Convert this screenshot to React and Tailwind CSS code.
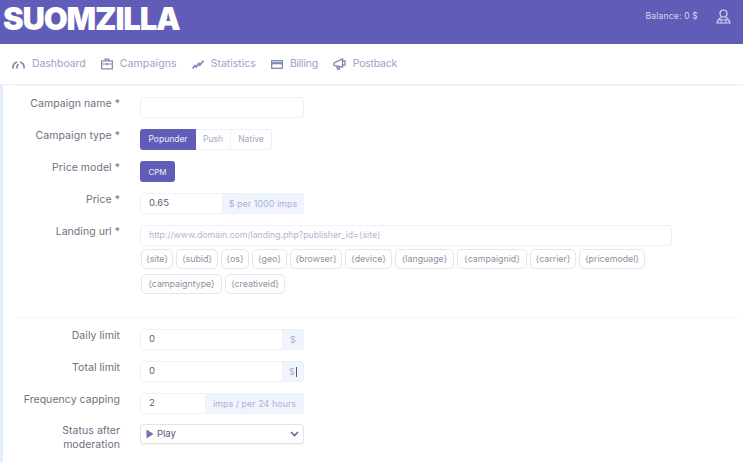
import React from "react";

function Row({ label, children, className = "" }) {
  return (
    <div className={"flex gap-5 " + className}>
      <label className="w-[102px] shrink-0 text-right text-[10.5px] leading-[14px] tracking-[0.05px] text-[#6e7180]">{label}</label>
      <div className="flex-1 min-w-0">{children}</div>
    </div>
  );
}

function Group({ value, addon, inputW }) {
  return (
    <div className="flex w-[164px] h-[21px] rounded-[3px] border border-[#edf1f9] overflow-hidden">
      <div className="flex items-center pl-2 text-[9.5px] text-[#5c6070] bg-white border-r border-[#edf1f9]" style={{ width: inputW }}>{value}</div>
      <div className="flex-1 flex items-center justify-center bg-[#f0f5fd] text-[9px] text-[#aab2d5]">{addon}</div>
    </div>
  );
}

const tags = [
  ["{site}", 32], ["{subid}", 42], ["{os}", 28], ["{geo}", 35], ["{browser}", 52], ["{device}", 47],
  ["{language}", 59], ["{campaignid}", 70], ["{carrier}", 46], ["{pricemodel}", 66], ["{campaigntype}", 81], ["{creativeid}", 60],
];

const Tag = ({ children, width }) => (
  <span style={{ width }} className="h-[20px] flex items-center justify-center rounded-[5px] border border-[#e6e6ea] text-[8.8px] text-[#8e91a0] bg-white">{children}</span>
);

const NavItem = ({ icon, label, className = "" }) => (
  <div className={"flex items-center gap-[7px] text-[#9aa3c6] text-[10.5px] " + className}>
    {icon}
    <span>{label}</span>
  </div>
);

const stroke = { fill: "none", stroke: "#7d88b5", strokeWidth: 1.3 };

export default function App() {
  return (
    <div className="w-[743px] h-[462px] overflow-hidden bg-white font-['Inter',sans-serif]">
      <header className="h-[44px] bg-[#625cb9] flex items-center pl-[3px] pr-[12px]">
        <div className="text-white font-black text-[31px] leading-none tracking-[-1.15px] mt-[-7px]">SUOMZILLA</div>
        <div className="ml-auto flex items-center gap-[18px] mt-[-12px]">
          <span className="text-[8.5px] tracking-[0.2px] text-[#d6d5f3]">Balance: 0 $</span>
          <svg width="15" height="15" viewBox="0 0 15 15" fill="none" stroke="#d6d5f3" strokeWidth="1.2">
            <circle cx="7.5" cy="4.5" r="3.5" />
            <path d="M5 8 C4.5 9.5 2 9.5 1 14 H14 C13 9.5 10.5 9.5 10 8" />
            <path d="M2.5 11 H12.5 M5.5 10 L5 14 M9.5 10 L10 14" strokeWidth="0.9" />
          </svg>
        </div>
      </header>

      <nav className="h-[40px] flex items-center pl-[12px] gap-[15px] bg-white">
        <NavItem label="Dashboard" className="tracking-[-0.05px]" icon={
          <svg width="13" height="9" viewBox="0 0 13 9" fill="none" stroke="#7d88b5" strokeWidth="1.7"><path d="M1 8.5 A6 6 0 0 1 5 2 M6 4 L4.5 8.5 M8 2 A6 6 0 0 1 12 8.5" /></svg>
        } />
        <NavItem label="Campaigns" className="tracking-[0.12px]" icon={
          <svg width="12" height="12" viewBox="0 0 13 12" {...stroke}><rect x="0.7" y="2.7" width="11.6" height="8.6" /><path d="M4.5 2.5 V0.8 H8.5 V2.5 M0.7 6 H12.3 M6.5 5 V7.5" /></svg>
        } />
        <NavItem label="Statistics" icon={
          <svg width="12" height="9" viewBox="0 0 12 9" fill="none" stroke="#7d88b5" strokeWidth="1.7"><path d="M0.5 8.5 L3 5.5 L4.3 7 L6.8 3.5 L7.8 5 L11.5 0.6" /></svg>
        } />
        <NavItem label="Billing" className="tracking-[-0.25px]" icon={
          <svg width="12" height="9" viewBox="0 0 12 9" {...stroke}><rect x="0.7" y="0.7" width="10.6" height="7.6" /><path d="M0.7 3.2 H11.3" strokeWidth="2.2" /></svg>
        } />
        <NavItem label="Postback" className="tracking-[-0.25px]" icon={
          <svg width="13" height="12" viewBox="0 0 13 12" {...stroke}><path d="M1 5 L9.5 0.8 V9.2 L1 7.5 Z M9.5 3 H12 V7 H9.5 M3.5 8 L4.5 11 H6.5 L5.8 8.5" /></svg>
        } />
      </nav>

      <div className="h-[462px] border-t border-[#e9f1fb] border-l-[3px] border-l-[#e3eefb] pl-[15px]">
        <div className="border-t border-dotted border-[#e6eefa] mr-[3px]"></div>
        <div className="pt-[11px]">
          <Row label="Campaign name *" className="mb-[11px]">
            <div className="w-[164px] h-[21px] rounded-[3px] border border-[#edf1f9] bg-white"></div>
          </Row>
          <Row label="Campaign type *" className="mb-[11px]">
            <div className="flex h-[21px] text-[8.5px]">
              <span className="w-[56px] flex items-center justify-center rounded-l-[3px] bg-[#625cb9] text-[#eeeefa]">Popunder</span>
              <span className="w-[35px] flex items-center justify-center border-y border-r border-[#edf1f9] text-[#a5a8c6]">Push</span>
              <span className="w-[41px] flex items-center justify-center border-y border-r border-[#edf1f9] rounded-r-[3px] text-[#a5a8c6]">Native</span>
            </div>
          </Row>
          <Row label="Price model *" className="mb-[11px]">
            <span className="w-[35px] h-[21px] flex items-center justify-center rounded-[3px] bg-[#625cb9] text-[#eeeefa] text-[8px]">CPM</span>
          </Row>
          <Row label="Price *" className="mb-[11px]">
            <Group value="0.65" addon="$ per 1000 imps" inputW={82} />
          </Row>
          <Row label="Landing url *" className="mb-[3px]">
            <div className="w-[532px] h-[21px] rounded-[3px] border border-[#edf1f9] flex items-center pl-2 text-[8.7px] text-[#b2b6d0]">http://www.domain.com/landing.php?publisher_id={"{site}"}</div>
          </Row>
          <Row label="" className="mb-[23px]">
            <div className="flex flex-wrap gap-x-[3px] gap-y-[5px] w-[520px] ml-[1px]">
              {tags.map(([t, w]) => (
                <Tag key={t} width={w}>{t}</Tag>
              ))}
            </div>
          </Row>
          <div className="border-t border-dotted border-[#e6eefa] mb-[11px] mr-[3px]"></div>
          <Row label="Daily limit" className="mb-[11px]">
            <Group value="0" addon="$" inputW={142} />
          </Row>
          <Row label="Total limit" className="mb-[11px]">
            <Group value="0" addon={<span>$<span className="border-r border-[#555] ml-[1px] h-[10px] inline-block align-middle"></span></span>} inputW={142} />
          </Row>
          <Row label="Frequency capping" className="mb-[10px]">
            <Group value="2" addon="imps / per 24 hours" inputW={65} />
          </Row>
          <Row label={<>Status after<br />moderation</>}>
            <div className="w-[164px] h-[20px] rounded-[3px] border border-[#e2e3e8] shadow-[0_1px_1px_rgba(0,0,0,0.06)] flex items-center pl-[5px] pr-[4px] text-[9.5px] text-[#555a6e]">
              <svg width="8" height="10" viewBox="0 0 8 10" className="mr-[3px]"><path d="M0.5 0.5 L7.5 5 L0.5 9.5 Z" fill="#6a73ad" /></svg>
              <span>Play</span>
              <svg width="9" height="6" viewBox="0 0 9 6" className="ml-auto" fill="none" stroke="#5a6a9a" strokeWidth="1.6"><path d="M1 1 L4.5 4.5 L8 1" /></svg>
            </div>
          </Row>
        </div>
      </div>
    </div>
  );
}
